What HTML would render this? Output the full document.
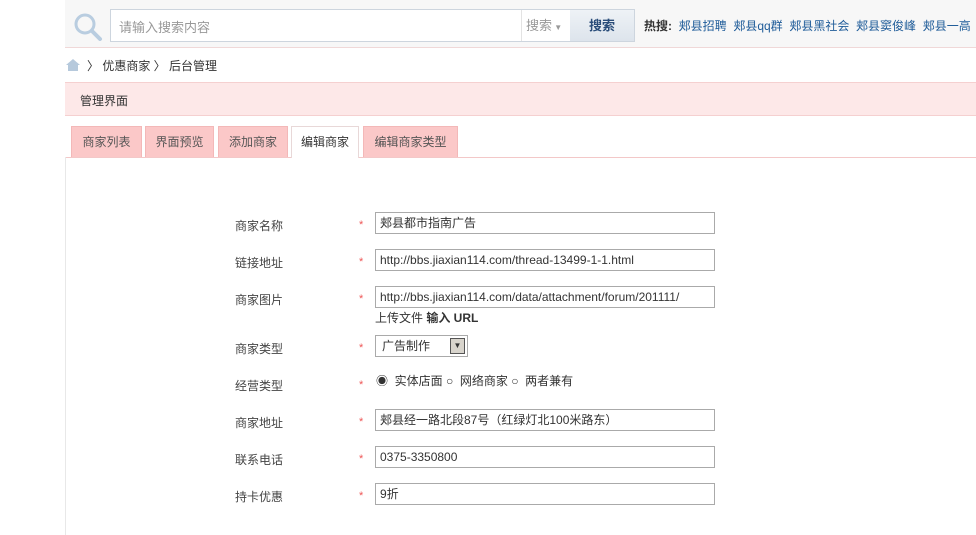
<!DOCTYPE html>
<html><head><meta charset="utf-8"><style>
*{margin:0;padding:0;box-sizing:border-box}
body{width:976px;height:535px;overflow:hidden;background:#fff;font-family:"Liberation Sans","Noto Sans CJK SC",sans-serif;font-size:12px;color:#333;position:relative}
.a{position:absolute}
.top{left:65px;top:0;width:911px;height:48px;background:#f7f7f7;border-bottom:1px solid #f0d8d8}
.inp{border:1px solid #aaa;background:#fff;height:22px;line-height:20px;padding-left:4px;font-size:12px;color:#333;white-space:nowrap;overflow:hidden}
.lab{left:235px;color:#444}
.star{left:359px;color:#e55;font-size:11px}
.tab{top:126px;height:31px;line-height:30px;background:#fbc8c8;border:1px solid #f3b8b8;border-bottom:none;text-align:center;color:#555;font-size:12px}
</style></head><body>
<div class="a top"></div>
<svg class="a" style="left:72px;top:11px" width="32" height="30"><circle cx="13" cy="13" r="9" fill="none" stroke="#b9cde0" stroke-width="3"/><line x1="20" y1="20" x2="28" y2="28" stroke="#b9cde0" stroke-width="4" stroke-linecap="round"/></svg>
<div class="a" style="left:110px;top:9px;width:525px;height:33px;border:1px solid #cdd5de;background:#fff"></div>
<div class="a" style="left:119px;top:17px;color:#999;font-size:13px">请输入搜索内容</div>
<div class="a" style="left:521px;top:10px;width:49px;height:31px;border-left:1px solid #e3e3e3;line-height:31px;padding-left:4px;color:#999;font-size:13px">搜索<span style="font-size:8px"> ▼</span></div>
<div class="a" style="left:570px;top:10px;width:64px;height:31px;background:linear-gradient(#eef2f6,#dde4ec);line-height:31px;text-align:center;color:#2a4d7a;font-weight:bold;font-size:13px">搜索</div>
<div class="a" style="left:644px;top:17px;font-size:12px;color:#1f5c99;white-space:nowrap"><b style="color:#333">热搜:</b>&nbsp; 郏县招聘&nbsp; 郏县qq群&nbsp; 郏县黑社会&nbsp; 郏县窦俊峰&nbsp; 郏县一高</div>
<svg class="a" style="left:65px;top:58px" width="16" height="14"><path d="M1 7 L8 1 L15 7 L13 7 L13 13 L3 13 L3 7Z" fill="#b6c9dc"/></svg>
<div class="a" style="left:87px;top:57px;color:#333">〉 优惠商家 〉 后台管理</div>
<div class="a" style="left:65px;top:82px;width:911px;height:34px;background:#fde8e8;border-top:1px solid #f5d0d0;border-bottom:1px solid #f5d0d0"></div>
<div class="a" style="left:80px;top:92px;color:#333">管理界面</div>
<div class="a" style="left:65px;top:157px;width:911px;border-top:1px solid #f3c8c8"></div>
<div class="a" style="left:65px;top:157px;height:378px;border-left:1px solid #e8e8e8"></div>
<div class="a tab" style="left:71px;width:71px">商家列表</div>
<div class="a tab" style="left:145px;width:69px">界面预览</div>
<div class="a tab" style="left:218px;width:70px">添加商家</div>
<div class="a tab" style="left:291px;width:68px;background:#fff;border-color:#e8d8d8;height:32px;color:#333">编辑商家</div>
<div class="a tab" style="left:363px;width:95px">编辑商家类型</div>

<div class="a lab" style="top:217px">商家名称</div><div class="a star" style="top:219px">*</div><div class="a inp" style="left:375px;top:212px;width:340px">郏县都市指南广告</div>
<div class="a lab" style="top:254px">链接地址</div><div class="a star" style="top:256px">*</div><div class="a inp" style="left:375px;top:249px;width:340px">http://bbs.jiaxian114.com/thread-13499-1-1.html</div>
<div class="a lab" style="top:291px">商家图片</div><div class="a star" style="top:293px">*</div><div class="a inp" style="left:375px;top:286px;width:340px">http://bbs.jiaxian114.com/data/attachment/forum/201111/</div>
<div class="a" style="left:375px;top:309px">上传文件 <b>输入 URL</b></div>
<div class="a lab" style="top:340px">商家类型</div><div class="a star" style="top:342px">*</div>
<div class="a inp" style="left:375px;top:335px;width:93px;padding-left:6px">广告制作</div>
<div class="a" style="left:450px;top:338px;width:15px;height:16px;background:#d8d4cc;border:1px solid #555;font-size:8px;text-align:center;line-height:14px">▼</div>
<div class="a lab" style="top:377px">经营类型</div><div class="a star" style="top:379px">*</div>
<div class="a" style="left:376px;top:372px;white-space:nowrap">◉ &nbsp;实体店面 ○ &nbsp;网络商家 ○ &nbsp;两者兼有</div>
<div class="a lab" style="top:414px">商家地址</div><div class="a star" style="top:416px">*</div><div class="a inp" style="left:375px;top:409px;width:340px">郏县经一路北段87号（红绿灯北100米路东）</div>
<div class="a lab" style="top:451px">联系电话</div><div class="a star" style="top:453px">*</div><div class="a inp" style="left:375px;top:446px;width:340px">0375-3350800</div>
<div class="a lab" style="top:488px">持卡优惠</div><div class="a star" style="top:490px">*</div><div class="a inp" style="left:375px;top:483px;width:340px">9折</div>
</body></html>
